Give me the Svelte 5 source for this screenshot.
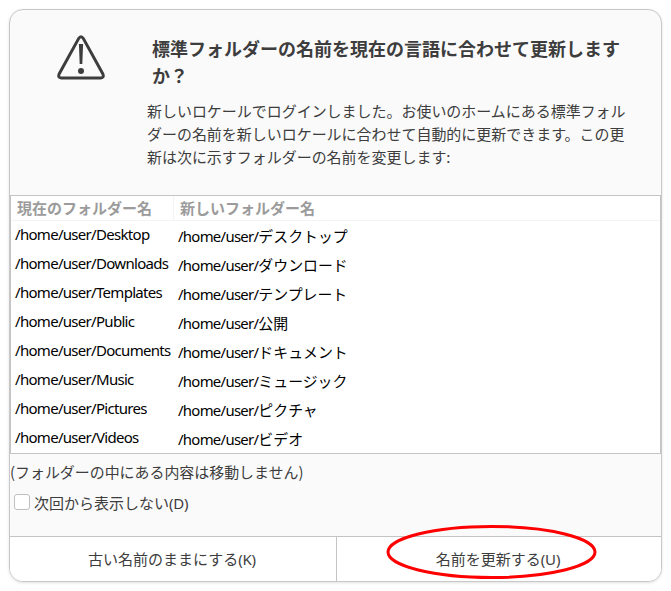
<script>
	const home = '/home/user/';

	const folders = [
		{ current: 'Desktop', next: 'デスクトップ' },
		{ current: 'Downloads', next: 'ダウンロード' },
		{ current: 'Templates', next: 'テンプレート' },
		{ current: 'Public', next: '公開' },
		{ current: 'Documents', next: 'ドキュメント' },
		{ current: 'Music', next: 'ミュージック' },
		{ current: 'Pictures', next: 'ピクチャ' },
		{ current: 'Videos', next: 'ビデオ' }
	];

	let skipNextTime = $state(false);
</script>

<div class="dialog" role="dialog" aria-labelledby="title">
	<header>
		<svg class="warning" width="50" height="48" viewBox="0 0 50 48">
			<path
				d="M22.6 4.6 Q25 0.9 27.4 4.6 L46.9 40 Q48.3 43.8 44.8 44 H5.2 Q1.7 43.8 3.1 40 Z"
				fill="none"
				stroke="#3d3d3d"
				stroke-width="3"
				stroke-linejoin="round"
			/>
			<path d="M22.9 10 H27.1 L26.3 30 H23.7 Z" fill="#3d3d3d" />
			<circle cx="25" cy="37" r="3" fill="#3d3d3d" />
		</svg>

		<div class="message">
			<h1 id="title">標準フォルダーの名前を現在の言語に合わせて更新しますか？</h1>
			<p>新しいロケールでログインしました。お使いのホームにある標準フォルダーの名前を新しいロケールに合わせて自動的に更新できます。この更新は次に示すフォルダーの名前を変更します:</p>
		</div>
	</header>

	<div class="list">
		<div class="row head">
			<div>現在のフォルダー名</div>
			<div>新しいフォルダー名</div>
		</div>
		{#each folders as folder}
			<div class="row">
				<div class="latin">{home}{folder.current}</div>
				<div class="new"><span class="latin">{home}</span>{folder.next}</div>
			</div>
		{/each}
	</div>

	<div class="options">
		<div class="note">(フォルダーの中にある内容は移動しません)</div>
		<label>
			<input type="checkbox" bind:checked={skipNextTime} />
			<span>次回から表示しない<span class="key">(D)</span></span>
		</label>
	</div>

	<footer>
		<button>古い名前のままにする<span class="key">(K)</span></button>
		<button>
			名前を更新する<span class="key">(U)</span>
			<svg class="mark" width="212" height="56" viewBox="0 0 212 56">
				<ellipse cx="105.5" cy="28" rx="103.5" ry="25.5" fill="none" stroke="#f00" stroke-width="3" />
			</svg>
		</button>
	</footer>
</div>

<style>
	:global(body) {
		background: #fff;
	}

	.dialog {
		display: flex;
		flex-direction: column;
		box-sizing: border-box;
		width: 653px;
		height: 573px;
		margin: 9px;
		border: 1px solid #c8c8c8;
		border-radius: 14px;
		background: #fafafa;
		box-shadow: 0 1px 3px rgba(0, 0, 0, .12);
		color: #3d3d3d;
		font-family: "Noto Sans CJK JP", "Noto Sans", sans-serif;
		font-size: 15px;
	}

	header {
		display: flex;
		box-sizing: border-box;
		height: 185px;
		padding: 24px 0 0 46px;
	}

	.warning {
		flex: none;
	}

	.message {
		width: 481px;
		margin-left: 41px;
	}

	h1 {
		margin: 0 0 0 5px;
		padding-top: 1px;
		font-size: 18px;
		font-weight: 700;
		line-height: 27px;
	}

	p {
		margin: 10px 0 0;
		font-size: 14.97px;
		line-height: 23px;
	}

	.list {
		box-sizing: border-box;
		height: 259px;
		border: 1px solid #c4c4c4;
		background: #fff;
		color: #000;
	}

	.row {
		display: grid;
		grid-template-columns: 163px 1fr;
		height: 29px;
		line-height: 27px;
		white-space: nowrap;
	}

	.row > div {
		padding-left: 4px;
	}

	.row .new {
		padding-top: 1px;
		font-size: 14.9px;
	}

	.latin {
		font-family: "Noto Sans", "Noto Sans CJK JP", sans-serif;
		letter-spacing: -.7px;
	}

	.row.head {
		box-sizing: border-box;
		height: 25px;
		border-bottom: 1px solid #f4f4f4;
		color: #9b9b9b;
		font-weight: 700;
		line-height: 23px;
	}

	.row.head > div {
		padding-left: 6px;
	}

	.row.head > div:first-child {
		box-sizing: border-box;
		border-right: 1px solid #f4f4f4;
	}

	.options {
		flex: 1;
	}

	.note {
		margin-top: 6px;
		font-size: 14.95px;
		line-height: 23px;
	}

	label {
		display: flex;
		align-items: center;
		gap: 4px;
		margin: 8px 0 0 4px;
		line-height: 23px;
	}

	input {
		appearance: none;
		box-sizing: border-box;
		width: 16px;
		height: 16px;
		margin: 0 0 2px;
		border: 1px solid #bfbfbf;
		border-radius: 3px;
		background: #fff;
	}

	input:checked {
		background: #e95420;
	}

	.key {
		font-family: "Noto Sans", sans-serif;
		letter-spacing: -.2px;
	}

	footer {
		display: grid;
		grid-template-columns: 327px 1fr;
		box-sizing: border-box;
		height: 45px;
		border-top: 1px solid #c4c4c4;
	}

	button {
		position: relative;
		padding: 0 2px 1px 0;
		border: 0;
		border-radius: 0 0 13px 0;
		background: #fff;
		color: inherit;
		font: inherit;
	}

	button:first-child {
		border-right: 1px solid #c4c4c4;
		border-radius: 0 0 0 13px;
	}

	/* red ring around the recommended choice */
	.mark {
		position: absolute;
		top: -13px;
		left: 49px;
		pointer-events: none;
	}
</style>
